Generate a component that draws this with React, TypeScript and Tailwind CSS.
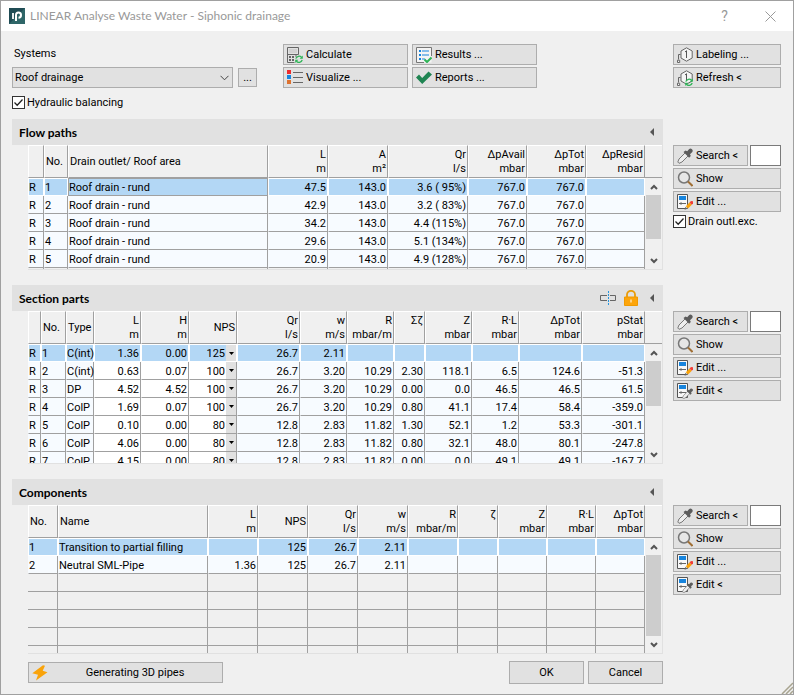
import React from 'react';
import clsx from 'clsx';

type Column = {
  title: string;
  unit?: string;
  width: string;
  left?: boolean;
  editable?: boolean;
  select?: boolean;
};

const flowColumns: Column[] = [
  { title: '', width: 'w-[16px]', left: true },
  { title: 'No.', width: 'w-[24px]', left: true },
  { title: 'Drain outlet/ Roof area', width: '', left: true },
  { title: 'L', unit: 'm', width: 'w-[60px]' },
  { title: 'A', unit: 'm²', width: 'w-[60px]' },
  { title: 'Qr', unit: 'l/s', width: 'w-[80px]' },
  { title: 'ΔpAvail', unit: 'mbar', width: 'w-[59px]' },
  { title: 'ΔpTot', unit: 'mbar', width: 'w-[59px]' },
  { title: 'ΔpResid', unit: 'mbar', width: 'w-[59px]' },
];

const flowRows = [
  ['R', '1', 'Roof drain - rund', '47.5', '143.0', '3.6 ( 95%)', '767.0', '767.0', ''],
  ['R', '2', 'Roof drain - rund', '42.9', '143.0', '3.2 ( 83%)', '767.0', '767.0', ''],
  ['R', '3', 'Roof drain - rund', '34.2', '143.0', '4.4 (115%)', '767.0', '767.0', ''],
  ['R', '4', 'Roof drain - rund', '29.6', '143.0', '5.1 (134%)', '767.0', '767.0', ''],
  ['R', '5', 'Roof drain - rund', '20.9', '143.0', '4.9 (128%)', '767.0', '767.0', ''],
];

const sectionColumns: Column[] = [
  { title: '', width: 'w-[13px]', left: true },
  { title: 'No.', width: 'w-[25px]', left: true },
  { title: 'Type', width: 'w-[28px]', left: true },
  { title: 'L', unit: 'm', width: 'w-[47px]', editable: true },
  { title: 'H', unit: 'm', width: 'w-[48px]', editable: true },
  { title: 'NPS', width: 'w-[48px]', editable: true, select: true },
  { title: 'Qr', unit: 'l/s', width: 'w-[63px]' },
  { title: 'w', unit: 'm/s', width: 'w-[47px]' },
  { title: 'R', unit: 'mbar/m', width: 'w-[47px]' },
  { title: 'Σζ', unit: ' ', width: 'w-[31px]' },
  { title: 'Z', unit: 'mbar', width: 'w-[47px]' },
  { title: 'R·L', unit: 'mbar', width: 'w-[47px]' },
  { title: 'ΔpTot', unit: 'mbar', width: 'w-[63px]' },
  { title: 'pStat', unit: 'mbar', width: '' },
];

const sectionRows = [
  ['R', '1', 'C(int)', '1.36', '0.00', '125', '26.7', '2.11', '', '', '', '', '', ''],
  ['R', '2', 'C(int)', '0.63', '0.07', '100', '26.7', '3.20', '10.29', '2.30', '118.1', '6.5', '124.6', '-51.3'],
  ['R', '3', 'DP', '4.52', '4.52', '100', '26.7', '3.20', '10.29', '0.00', '0.0', '46.5', '46.5', '61.5'],
  ['R', '4', 'ColP', '1.69', '0.07', '100', '26.7', '3.20', '10.29', '0.80', '41.1', '17.4', '58.4', '-359.0'],
  ['R', '5', 'ColP', '0.10', '0.00', '80', '12.8', '2.83', '11.82', '1.30', '52.1', '1.2', '53.3', '-301.1'],
  ['R', '6', 'ColP', '4.06', '0.00', '80', '12.8', '2.83', '11.82', '0.80', '32.1', '48.0', '80.1', '-247.8'],
  ['R', '7', 'ColP', '4.15', '0.00', '80', '12.8', '2.83', '11.82', '0.00', '0.0', '49.1', '49.1', '-167.7'],
];

const componentColumns: Column[] = [
  { title: 'No.', width: 'w-[30px]', left: true },
  { title: 'Name', width: '', left: true },
  { title: 'L', unit: 'm', width: 'w-[50px]' },
  { title: 'NPS', width: 'w-[50px]' },
  { title: 'Qr', unit: 'l/s', width: 'w-[50px]' },
  { title: 'w', unit: 'm/s', width: 'w-[50px]' },
  { title: 'R', unit: 'mbar/m', width: 'w-[50px]' },
  { title: 'ζ', unit: ' ', width: 'w-[40px]' },
  { title: 'Z', unit: 'mbar', width: 'w-[49px]' },
  { title: 'R·L', unit: 'mbar', width: 'w-[49px]' },
  { title: 'ΔpTot', unit: 'mbar', width: 'w-[49px]' },
];

const componentRows = [
  ['1', 'Transition to partial filling', '', '125', '26.7', '2.11', '', '', '', '', ''],
  ['2', 'Neutral SML-Pipe', '1.36', '125', '26.7', '2.11', '', '', '', '', ''],
];

/* ---------- icons ---------- */

function Svg({ children }: { children: React.ReactNode }) {
  return (
    <svg viewBox="0 0 16 16" className="w-4 h-4 shrink-0" fill="none" aria-hidden="true">
      {children}
    </svg>
  );
}

function RefreshMark() {
  return (
    <>
      <path d="M8.8 11.6a3.4 3.4 0 0 1 5.8-1.2M15.2 13a3.4 3.4 0 0 1-5.8 1.2" stroke="#2fb457" strokeWidth="1.3" />
      <path d="M15.8 8.6v3.2h-3.2zM8.2 16v-3.2h3.2z" fill="#2fb457" />
    </>
  );
}

function CalculatorIcon() {
  return (
    <Svg>
      <path d="M7.5 15.5h-7V.5h11v7" stroke="#666" />
      <path d="M.5 7.5h11" stroke="#666" />
      <path d="M2 2h8v4H2z" fill="#d2d2d2" />
      <path d="M2 9h2v2H2zM5 9h2v2H5zM2 12h2v2H2zM5 12h2v2H5zM8 8.5h2v1H8z" fill="#666" />
      <RefreshMark />
    </Svg>
  );
}

function VisualizeIcon() {
  return (
    <Svg>
      <path d="M0 0h4v4H0z" fill="#ee2b2b" />
      <path d="M0 5h4v4H0z" fill="#1784dd" />
      <path d="M0 10h4v4H0z" fill="#dd7230" />
      <path d="M6 2.5h10M6 7.5h10M6 12.5h10" stroke="#666" />
    </Svg>
  );
}

function ResultsIcon() {
  return (
    <Svg>
      <path d="M.5.5h15v15H.5z" fill="#f4f4f4" />
      <path d="M15.5 9V.5H.5v15H8" stroke="#777" />
      <path d="M3 3h2v2H3zM3 7h2v2H3zM3 11h2v2H3zM6 3.5h7v1H6zM6 7.5h7v1H6zM6 11.5h3v1H6z" fill="#1784dd" />
      <path d="M8.5 12.5L11 15l4.5-4.5" stroke="#2fb457" strokeWidth="2" />
    </Svg>
  );
}

function ReportsIcon() {
  return (
    <Svg>
      <path d="M0 7.5l3-3 3.2 3.4L12.5 1.5l3.500 3L6.200 14z" fill="#1f8452" />
    </Svg>
  );
}

function LabelingIcon({ refresh }: { refresh?: boolean }) {
  return (
    <Svg>
      <path d="M9.500.8l5.700 3.200v7L9.500 14.200 4 11V4z" fill="#f4f4f4" stroke="#666" />
      <path d="M8 5l1.500-1.300v7.300" stroke="#555" />
      <path d="M3.500 7.500h-2v5" stroke="#666" />
      <path d="M.5 13.200h2.200v2.300H.5z" fill="#f4f4f4" stroke="#666" />
      {refresh && <RefreshMark />}
    </Svg>
  );
}

function PipetteShape() {
  return (
    <>
      <path d="M8.500 4.500l3 3-6.500 6.500-3 1.300L.8 14l1.200-3z" fill="#eee" stroke="#777" />
      <path d="M6.500 4l2-1.600 1.700.8L12 1.200a2.200 2.200 0 0 1 3.100 3.100L13 6.200l.8 1.700-1.700 1.900z" fill="#5c5c5c" />
    </>
  );
}

function PipetteIcon() {
  return (
    <Svg>
      <PipetteShape />
    </Svg>
  );
}

function MagnifierIcon() {
  return (
    <Svg>
      <circle cx="7" cy="6.500" r="5.500" fill="#e6e6e6" stroke="#777" strokeWidth="1.500" />
      <path d="M11 10.500l4.500 4.500" stroke="#a06f35" strokeWidth="2" />
    </Svg>
  );
}

function EditIcon({ pick }: { pick?: boolean }) {
  return (
    <Svg>
      <path d="M.5.5h10v14H.5z" fill="#f8f8f8" stroke="#555" />
      <path d="M2 2h7v4H2z" fill="#1784dd" />
      <path d="M2 9.500h7" stroke="#666" />
      <path d="M2 9.500L4.500 8v3z" fill="#666" />
      {pick ? (
        <g transform="translate(5 5) scale(.7)">
          <PipetteShape />
        </g>
      ) : (
        <>
          <path d="M7.500 15.800l1-3 2 2z" fill="#666" />
          <path d="M8.800 12.200l3.700-3.700 2.300 2.300-3.700 3.700z" fill="#fba40b" />
          <path d="M12.500 8.500L14 7l2 .2v2.300l-1.200 1.300z" fill="#f23d36" />
        </>
      )}
    </Svg>
  );
}

function LockIcon() {
  return (
    <svg viewBox="0 0 14 16" className="w-3.5 h-4" fill="none" aria-hidden="true">
      <path d="M3 7V4.500a4 3.700 0 0 1 8 0V7" stroke="#e99c08" strokeWidth="1.800" />
      <path d="M.5 7h13v8.500H.5z" fill="#fda50b" stroke="#f09a00" />
      <path d="M7 9.500v3" stroke="#fff" />
    </svg>
  );
}

function SplitIcon() {
  return (
    <svg viewBox="0 0 16 14" className="w-4 h-3.5" fill="none" aria-hidden="true">
      <path d="M7 4.500H.5v5H7M10 4.500h5.500v5H10" stroke="#666" />
      <path d="M8.500 0v14" stroke="#2795dd" strokeDasharray="2 1" />
    </svg>
  );
}

function BoltIcon() {
  return (
    <Svg>
      <path d="M11 .3L.3 8.300l5.700 1.500L4 15.500l11.500-8.300-4.800-1.500L13 .8z" fill="#f9a30a" />
    </Svg>
  );
}

function Chevron({ up }: { up?: boolean }) {
  return (
    <svg viewBox="0 0 8 6" className="w-2 h-1.5" fill="none" aria-hidden="true">
      <path d={up ? 'M1 5l3-3 3 3' : 'M1 1l3 3 3-3'} stroke="#555" strokeWidth="2" />
    </svg>
  );
}

/* ---------- controls ---------- */

function ToolButton({ icon, label, className }: { icon: React.ReactNode; label: string; className?: string }) {
  return (
    <button
      type="button"
      className={clsx(
        'flex items-center gap-[3px] h-[21px] pl-[3px] border border-[#adadad] bg-[#e1e1e1] whitespace-nowrap',
        className,
      )}
    >
      {icon}
      <span>{label}</span>
    </button>
  );
}

function CheckBox({ label }: { label: string }) {
  return (
    <label className="flex items-center gap-[2px] h-[13px] whitespace-nowrap">
      <span className="relative flex w-[13px] h-[13px]">
        <input type="checkbox" defaultChecked className="peer appearance-none w-[13px] h-[13px] border border-[#333] bg-white" />
        <svg viewBox="0 0 13 13" className="absolute inset-0 hidden peer-checked:block pointer-events-none" fill="none" aria-hidden="true">
          <path d="M2.500 6.500l2.700 2.700 5.300-5.700" stroke="#222" strokeWidth="1.300" />
        </svg>
      </span>
      {label}
    </label>
  );
}

function Scrollbar({ thumb }: { thumb: string }) {
  return (
    <div className="flex flex-col w-[17px] shrink-0">
      <div className="h-[33px] shrink-0 border-t border-t-white border-b border-b-[#a0a0a0]" />
      <div className="flex flex-col flex-1 pl-px">
        <button type="button" aria-label="Scroll up" className="flex items-center justify-center h-[17px]">
          <Chevron up />
        </button>
        <div className="flex-1">
          <div className={clsx('bg-[#cdcdcd] mr-px', thumb)} />
        </div>
        <button type="button" aria-label="Scroll down" className="flex items-center justify-center h-[17px]">
          <Chevron />
        </button>
      </div>
    </div>
  );
}

type GridProps = {
  label: string;
  columns: Column[];
  rows: string[][];
  height: string;
  thumb: string;
  focusCell?: number;
  emptyRows?: number;
};

function DataGrid({ label, columns, rows, height, thumb, focusCell, emptyRows = 0 }: GridProps) {
  return (
    <div className={clsx('flex ml-4 overflow-hidden border-r border-b border-[#e1e1e1]', height)}>
      <div className="flex-1 min-w-0 overflow-hidden">
        <table aria-label={label} className="w-full table-fixed border-separate border-spacing-0">
          <colgroup>
            {columns.map((c, i) => (
              <col key={i} className={c.width} />
            ))}
          </colgroup>
          <thead>
            <tr className="h-[33px]">
              {columns.map((c, i) => (
                <th
                  key={i}
                  className={clsx(
                    'p-0 px-px align-middle font-normal whitespace-nowrap border border-t-white border-l-white border-r-[#a0a0a0] border-b-[#a0a0a0]',
                    c.left ? 'text-left' : 'text-right',
                  )}
                >
                  {c.title}
                  {c.unit && <span className="block whitespace-pre">{c.unit}</span>}
                </th>
              ))}
            </tr>
          </thead>
          <tbody>
            {rows.map((row, r) => (
              <tr key={r} className="h-[18px]">
                {row.map((cell, i) => {
                  const col = columns[i];
                  const selected = r === 0;
                  return (
                    <td
                      key={i}
                      className={clsx(
                        'p-0 whitespace-nowrap border-l',
                        !col.select && 'pt-[2px]',
                        !col.select && !col.left && 'pr-px',
                        col.left ? 'text-left' : 'text-right',
                        selected && focusCell === i && 'border border-[#a0a0a0] bg-[#b3d7f5]',
                        selected && focusCell !== i && 'border border-white bg-[#b3d7f5]',
                        !selected && 'border-l-transparent border-r border-r-[#a0a0a0] border-b border-b-[#a0a0a0]',
                        !selected && (col.editable ? 'bg-white' : 'bg-[#f7fbff]'),
                      )}
                    >
                      {col.select ? (
                        <span className={clsx('flex', selected ? 'h-4' : 'h-[17px]')}>
                          <select
                            aria-label={`NPS ${row[1]}`}
                            defaultValue={cell}
                            className="appearance-none flex-1 min-w-0 p-0 pt-[2px] pr-px leading-[14px] bg-transparent [text-align-last:right]"
                          >
                            <option>80</option>
                            <option>100</option>
                            <option>125</option>
                          </select>
                          <span className="flex items-center justify-center w-[10px] bg-[#e1e1e1]">
                            <svg viewBox="0 0 5 3" className="w-[5px] h-[3px]" aria-hidden="true">
                              <path d="M0 0h5L2.500 3z" fill="#000" />
                            </svg>
                          </span>
                        </span>
                      ) : (
                        cell
                      )}
                    </td>
                  );
                })}
              </tr>
            ))}
            {Array.from({ length: emptyRows }, (_, r) => (
              <tr key={`empty-${r}`} className="h-[18px]">
                {columns.map((_, i) => (
                  <td key={i} className="p-0 border-r border-b border-[#a0a0a0]" />
                ))}
              </tr>
            ))}
          </tbody>
        </table>
      </div>
      <Scrollbar thumb={thumb} />
    </div>
  );
}

type SectionProps = {
  title: string;
  actions?: React.ReactNode;
  tools: React.ReactNode;
  children: React.ReactNode;
};

function Section({ title, actions, tools, children }: SectionProps) {
  return (
    <section className="flex gap-[10px]">
      <div className="flex-1 min-w-0">
        <div className="flex items-center justify-between h-[26px] pl-[7px] pr-[9px] bg-[#e1e1e1]">
          <h2 className="pt-px font-['Lato',sans-serif] font-bold text-[12px]">{title}</h2>
          <div className="flex items-center gap-2">
            {actions}
            <button type="button" aria-label={`Collapse ${title}`}>
              <svg viewBox="0 0 4 8" className="w-1 h-2" aria-hidden="true">
                <path d="M4 0v8L0 4z" fill="#555" />
              </svg>
            </button>
          </div>
        </div>
        {children}
      </div>
      <div className="flex flex-col gap-[2px] w-[108px] pt-[26px]">
        <div className="flex gap-[2px]">
          <ToolButton icon={<PipetteIcon />} label="Search <" className="w-[75px]" />
          <input type="text" aria-label={`Search ${title}`} className="flex-1 min-w-0 h-[21px] px-1 border border-[#7a7a7a] bg-white" />
        </div>
        <ToolButton icon={<MagnifierIcon />} label="Show" />
        <ToolButton icon={<EditIcon />} label="Edit ..." />
        {tools}
      </div>
    </section>
  );
}

export default function App() {
  return (
    <div className="relative flex flex-col min-h-screen border border-[#a0a0a0] bg-[#f0f0f0] font-['Roboto','Liberation_Sans',sans-serif] text-[11px] leading-[14px] text-black">
      {/* Title bar */}
      <header className="flex items-center h-[30px] pl-2 bg-white text-[#999]">
        <svg viewBox="0 0 16 16" className="w-4 h-4" fill="none" aria-hidden="true">
          <path d="M0 0h16v16H0z" fill="#1f4b54" />
          <path d="M0 16L16 0v16z" fill="#2f6668" />
          <path d="M4 5v6" stroke="#fff" strokeWidth="1.800" />
          <path d="M7 13V7c0-3.500 5-3.500 5 0 0 2-1 2.800-2.500 2.800" stroke="#fff" strokeWidth="2" />
        </svg>
        <h1 className="flex-1 pl-[5px] font-['Lato',sans-serif] text-[12px] whitespace-nowrap">
          LINEAR Analyse Waste Water - Siphonic drainage
        </h1>
        <button type="button" aria-label="Help" className="w-[45px] text-[14px]">
          ?
        </button>
        <button type="button" aria-label="Close" className="flex items-center justify-center w-[46px]">
          <svg viewBox="0 0 11 11" className="w-[11px] h-[11px]" fill="none" aria-hidden="true">
            <path d="M.5.5l10 10M10.500.5l-10 10" stroke="#999" />
          </svg>
        </button>
      </header>

      <main className="flex flex-col flex-1 pt-[13px] pb-[10px] pl-[11px] pr-3">
        {/* Systems and calculation */}
        <div className="flex items-start mb-[10px]">
          <div className="w-[245px] mr-[26px]">
            <label htmlFor="system" className="flex items-center h-[23px] pl-[2px] pb-1">
              Systems
            </label>
            <div className="flex items-center gap-[5px] mb-2">
              <div className="relative flex-1">
                <select id="system" className="block appearance-none w-full h-[21px] pl-[2px] border border-[#adadad] bg-[#e1e1e1]">
                  <option>Roof drainage</option>
                </select>
                <svg viewBox="0 0 9 6" className="absolute right-1 top-2 w-[9px] h-1.5 pointer-events-none" fill="none" aria-hidden="true">
                  <path d="M.5.8l4 4 4-4" stroke="#444" />
                </svg>
              </div>
              <button type="button" aria-label="More systems" className="w-[19px] h-[19px] border border-[#adadad] bg-[#e1e1e1]">
                ...
              </button>
            </div>
            <CheckBox label="Hydraulic balancing" />
          </div>
          <div className="grid grid-cols-[125px_125px] gap-x-1 gap-y-[2px]">
            <ToolButton icon={<CalculatorIcon />} label="Calculate" />
            <ToolButton icon={<ResultsIcon />} label="Results ..." />
            <ToolButton icon={<VisualizeIcon />} label="Visualize ..." />
            <ToolButton icon={<ReportsIcon />} label="Reports ..." />
          </div>
          <div className="flex flex-col gap-[2px] w-[108px] ml-auto">
            <ToolButton icon={<LabelingIcon />} label="Labeling ..." />
            <ToolButton icon={<LabelingIcon refresh />} label="Refresh <" />
          </div>
        </div>

        <div className="flex flex-col gap-[15px]">
          <Section
            title="Flow paths"
            tools={
              <div className="pt-px">
                <CheckBox label="Drain outl.exc." />
              </div>
            }
          >
            <DataGrid label="Flow paths" columns={flowColumns} rows={flowRows} height="h-[125px]" thumb="h-[44px]" focusCell={2} emptyRows={1} />
          </Section>

          <Section
            title="Section parts"
            actions={
              <>
                <button type="button" aria-label="Split section">
                  <SplitIcon />
                </button>
                <button type="button" aria-label="Lock" className="mr-1">
                  <LockIcon />
                </button>
              </>
            }
            tools={<ToolButton icon={<EditIcon pick />} label="Edit <" />}
          >
            <DataGrid label="Section parts" columns={sectionColumns} rows={sectionRows} height="h-[153px]" thumb="h-[45px]" />
          </Section>

          <Section title="Components" tools={<ToolButton icon={<EditIcon pick />} label="Edit <" />}>
            <DataGrid label="Components" columns={componentColumns} rows={componentRows} height="h-[149px]" thumb="h-[81px]" emptyRows={5} />
          </Section>
        </div>

        {/* Dialog buttons */}
        <div className="flex items-center gap-1 mt-[7px] pl-4 pr-[118px]">
          <button type="button" className="flex items-center w-[195px] h-[21px] pl-[3px] mr-auto border border-[#adadad] bg-[#e1e1e1]">
            <BoltIcon />
            <span className="flex-1 text-center">Generating 3D pipes</span>
          </button>
          <button type="button" className="w-[75px] h-[23px] border border-[#adadad] bg-[#e1e1e1]">
            OK
          </button>
          <button type="button" className="w-[75px] h-[23px] border border-[#adadad] bg-[#e1e1e1]">
            Cancel
          </button>
        </div>
      </main>

      {/* Resize grip */}
      <svg viewBox="0 0 12 12" className="absolute right-0 bottom-0 w-3 h-3" fill="none" aria-hidden="true">
        <path d="M1 12L12 1M5 12l7-7M9 12l3-3" stroke="#a8a490" strokeWidth="1.500" />
      </svg>
    </div>
  );
}
